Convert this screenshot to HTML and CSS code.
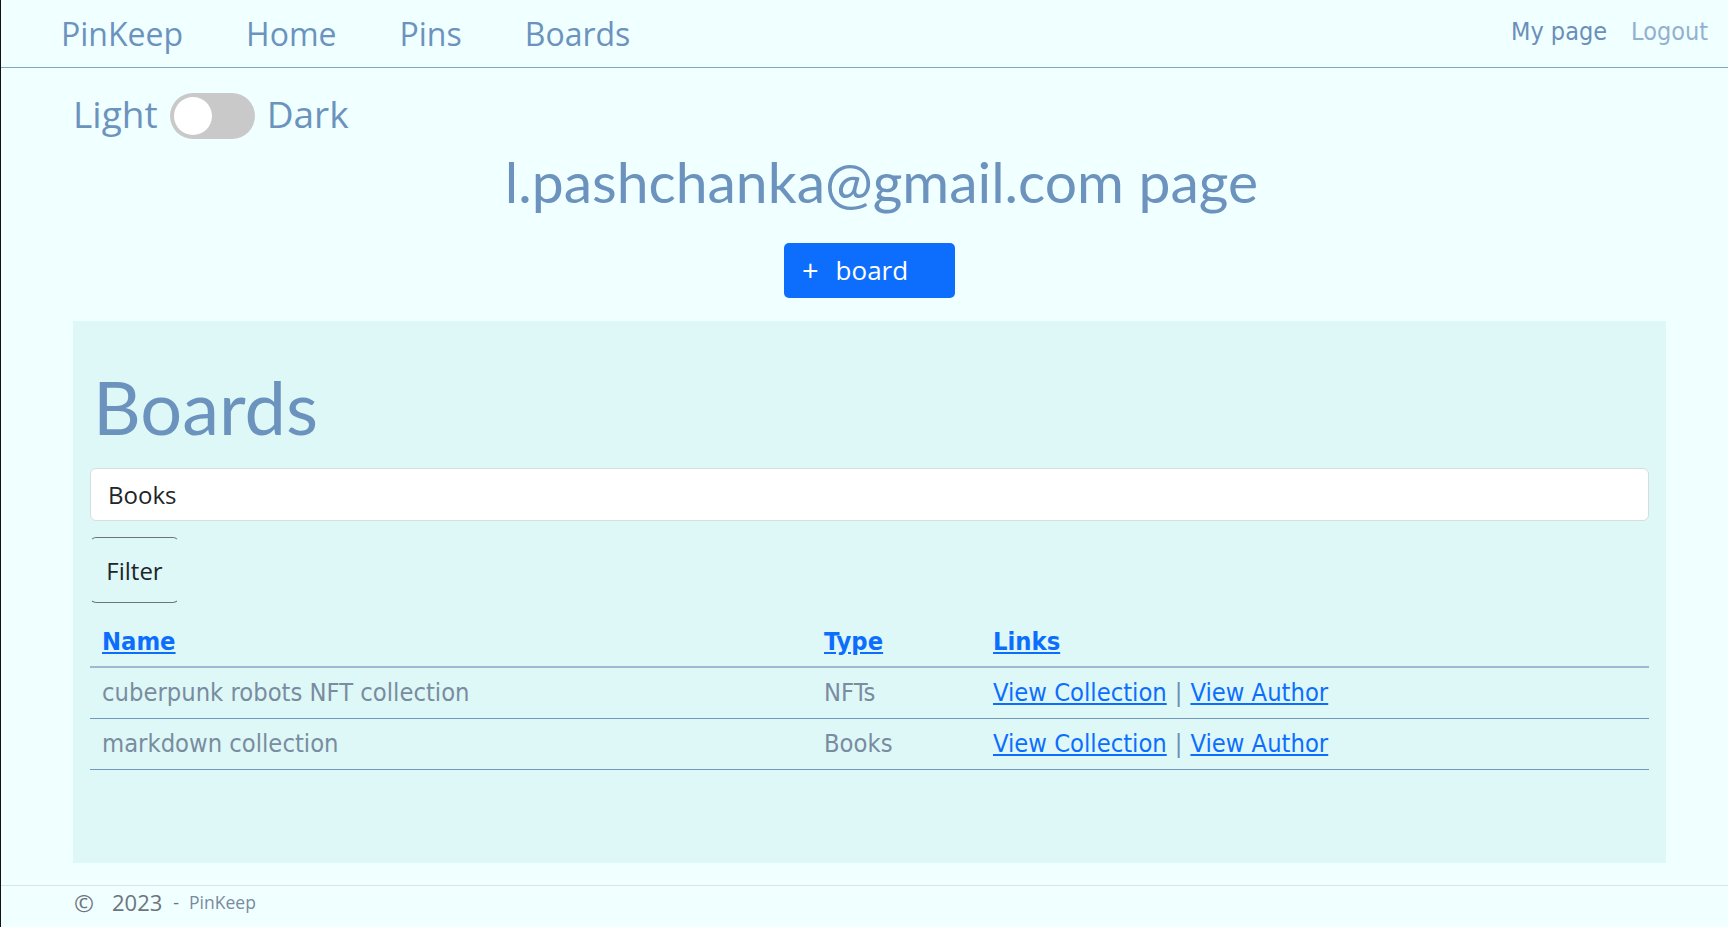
FILE: index.html
```html
<!DOCTYPE html>
<html lang="en">
<head>
<meta charset="utf-8">
<title>PinKeep - My page</title>
<link rel="stylesheet" href="styles.css">
</head>
<body>
<div class="frame">
  <header class="topbar">
    <nav class="main-nav">
      <a href="#" class="brand">PinKeep</a>
      <a href="#">Home</a>
      <a href="#">Pins</a>
      <a href="#">Boards</a>
    </nav>
    <nav class="user-nav">
      <a href="#" class="my-page">My page</a>
      <a href="#" class="logout">Logout</a>
    </nav>
  </header>

  <main class="container">
    <div class="theme-switch">
      <span class="theme-label">Light</span>
      <span class="toggle"><span class="knob"></span></span>
      <span class="theme-label">Dark</span>
    </div>

    <h1 class="page-title">l.pashchanka@gmail.com page</h1>

    <div class="actions">
      <button class="btn-add" type="button"><span class="plus">+</span>board</button>
    </div>

    <section class="panel">
      <h2 class="panel-title">Boards</h2>
      <input class="search" type="text" value="Books">
      <button class="btn-filter" type="button">Filter</button>

      <table class="boards">
        <thead>
          <tr>
            <th class="col-name"><a href="#">Name</a></th>
            <th class="col-type"><a href="#">Type</a></th>
            <th class="col-links"><a href="#">Links</a></th>
          </tr>
        </thead>
        <tbody>
          <tr>
            <td>cuberpunk robots NFT collection</td>
            <td>NFTs</td>
            <td><a href="#">View Collection</a><span class="sep">|</span><a href="#">View Author</a></td>
          </tr>
          <tr>
            <td>markdown collection</td>
            <td>Books</td>
            <td><a href="#">View Collection</a><span class="sep">|</span><a href="#">View Author</a></td>
          </tr>
        </tbody>
      </table>
    </section>
  </main>

  <footer class="footer">
    <span class="copy">©</span>
    <span class="year">2023</span>
    <span class="dash">-</span>
    <a href="#" class="footer-brand">PinKeep</a>
  </footer>
</div>
</body>
</html>
```

FILE: styles.css
```css
* {
  box-sizing: border-box;
}

html, body {
  margin: 0;
  padding: 0;
  background: #ffffff;
}

body {
  font-family: "Open Sans", "Noto Sans", sans-serif;
  color: #212529;
}

.frame {
  width: 1728px;
  height: 927px;
  background: #f0ffff;
  border-left: 1px solid #111111;
  overflow: hidden;
}

/* ---------- top bar ---------- */
.topbar {
  height: 68px;
  border-bottom: 1px solid #7ea6c8;
  display: flex;
  justify-content: space-between;
  align-items: flex-start;
}

.main-nav {
  display: flex;
  gap: 63px;
  padding-left: 60px;
}

.main-nav a {
  font-size: 32px;
  line-height: 68px;
  color: #6b93bd;
  text-decoration: none;
}

.user-nav {
  display: flex;
  gap: 24px;
  padding-right: 20px;
}

.user-nav a {
  font-family: "DejaVu Sans", sans-serif;
  font-stretch: condensed;
  font-size: 25px;
  line-height: 64px;
  text-decoration: none;
}

.user-nav .my-page {
  color: #6b8fb8;
}

.user-nav .logout {
  color: #93b1cf;
}

/* ---------- main ---------- */
.container {
  margin-left: 72px;
  width: 1593px;
}

.theme-switch {
  margin-top: 25px;
  height: 46px;
  display: flex;
  align-items: center;
  gap: 12px;
}

.theme-label {
  font-size: 37px;
  line-height: 46px;
  margin-top: -4px;
  color: #6b93bd;
}

.toggle {
  width: 85px;
  height: 46px;
  border-radius: 23px;
  background: #c9c9c9;
  padding: 4px;
  display: flex;
}

.knob {
  width: 38px;
  height: 38px;
  border-radius: 50%;
  background: #ffffff;
}

.page-title {
  margin: 10px 0 0;
  padding-left: 24px;
  text-align: center;
  font-family: "Lato", "Open Sans", sans-serif;
  font-weight: 400;
  font-size: 57px;
  line-height: 65px;
  color: #6b93bd;
}

.actions {
  margin-top: 29px;
  display: flex;
  justify-content: center;
}

.btn-add {
  width: 171px;
  height: 55px;
  border: none;
  border-radius: 5px;
  background: #0d6efd;
  color: #ffffff;
  font-family: "Open Sans", sans-serif;
  font-size: 26px;
  text-align: left;
  padding: 0 0 2px 18px;
  display: flex;
  align-items: center;
}

.btn-add .plus {
  font-size: 29px;
  margin-right: 17px;
}

/* ---------- panel ---------- */
.panel {
  margin-top: 23px;
  background: #def8f8;
  padding: 41px 17px 93px;
}

.panel-title {
  margin: 0;
  padding-left: 3px;
  font-family: "Lato", "Open Sans", sans-serif;
  font-weight: 400;
  font-size: 74px;
  line-height: 89px;
  color: #6b93bd;
}

.search {
  display: block;
  margin-top: 17px;
  width: 100%;
  height: 53px;
  border: 1px solid #d6dde2;
  border-radius: 6px;
  background: #ffffff;
  padding: 0 17px;
  font-family: "Open Sans", sans-serif;
  font-size: 24px;
  color: #212529;
  outline: none;
}

.btn-filter {
  display: block;
  margin-top: 16px;
  width: 89px;
  height: 66px;
  border: 1.5px solid #6c757d;
  border-left-color: transparent;
  border-right-color: transparent;
  border-radius: 6px;
  background: transparent;
  font-family: "Open Sans", sans-serif;
  font-size: 24px;
  color: #212529;
  padding: 0;
}

.boards {
  margin-top: 16px;
  width: 100%;
  border-collapse: collapse;
  font-family: "DejaVu Sans", sans-serif;
  font-stretch: condensed;
  font-size: 25.3px;
}

.boards th,
.boards td {
  text-align: left;
  vertical-align: middle;
  padding: 0 12px;
}

.boards th {
  height: 48px;
  padding-bottom: 3px;
  border-bottom: 2px solid #9dbad2;
  font-weight: 700;
}

.boards th a {
  color: #0d6efd;
}

.boards td {
  height: 51px;
  border-bottom: 1px solid #7099bd;
  color: #7a8ca0;
}

.boards .col-name {
  width: 722px;
}

.boards .col-type {
  width: 169px;
}

.boards td a {
  color: #0d6efd;
}

.boards .sep {
  color: #6b8fb8;
  margin: 0 8px;
}

/* ---------- footer ---------- */
.footer {
  margin-top: 22px;
  border-top: 1px solid #dce2e5;
  height: 34px;
  display: flex;
  align-items: center;
  padding-left: 73px;
  color: #6c757d;
}

.copy {
  font-size: 24px;
  margin-right: 18px;
}

.year {
  font-size: 22px;
  margin-right: 11px;
}

.dash {
  font-size: 18px;
  margin-right: 10px;
}

.footer-brand {
  font-size: 17.5px;
  color: #7a8a9c;
  text-decoration: none;
}
```
